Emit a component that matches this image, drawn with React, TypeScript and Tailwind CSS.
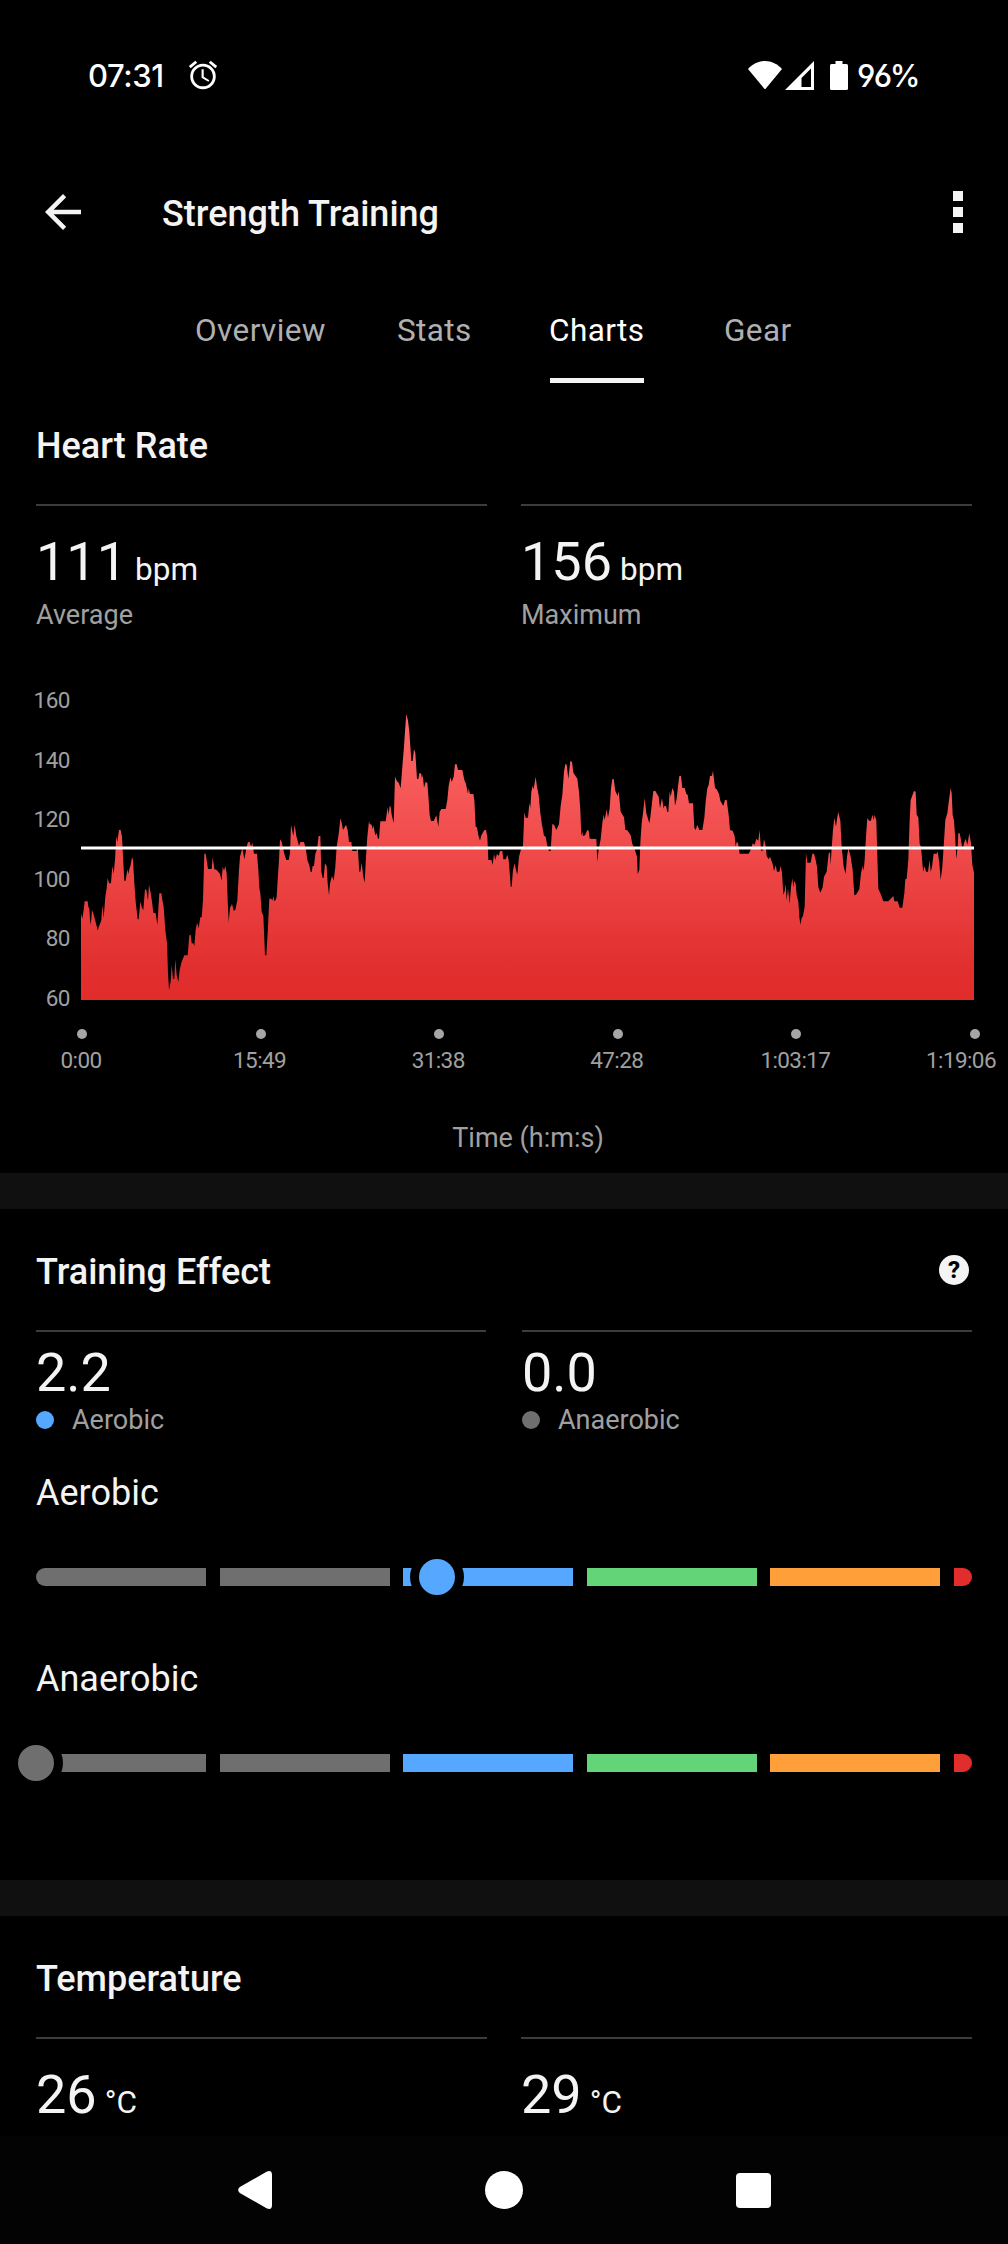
import clsx from "clsx";
import type { ReactNode } from "react";
import { MdAccessAlarm, MdArrowBack } from "react-icons/md";

const TABS = [
	{ label: "Overview", className: "ml-[195px] w-[133px]" },
	{ label: "Stats", className: "ml-[69px] w-[74px]" },
	{ label: "Charts", className: "ml-[79px] w-[94px]", active: true },
	{ label: "Gear", className: "ml-[80px]" },
];

const BPM_LABELS = [160, 140, 120, 100, 80, 60];

const TIME_LABELS = ["0:00", "15:49", "31:38", "47:28", "1:03:17", "1:19:06"];

const EFFECT_ZONES = [
	"w-[170px] rounded-l-full bg-[#6f6f6f]",
	"w-[170px] bg-[#6f6f6f]",
	"w-[170px] bg-[#55a7ff]",
	"w-[170px] bg-[#63d477]",
	"w-[170px] bg-[#ff9f3a]",
	"w-[18px] rounded-r-full bg-[#e22d2d]",
];

// Heart rate curve in chart units, 2679 wide, y = 66 is 160 bpm and y = 960 is 60 bpm.
const HEART_RATE_POINTS = [
	"0,700 4,716 8,690 11,664 20,664 22,680 25,686 28,735 31,716 33,690 37,700 39,708 43,722 46,736 48,740 50,752 54,738 57,732 61,720 64,676 68,714",
	"73,650 77,625 80,594 84,610 90,610 94,558 98,582 102,540 106,468 109,486 114,450 119,450 123,470 126,530 130,602 134,602 139,568 142,582 145,568",
	"149,555 153,532 156,540 160,610 164,665 170,718 173,718 178,665 183,684 187,690 192,628 196,630 201,662 204,614 209,638 213,665 217,698 224,700",
	"229,735 235,640 241,640 244,660 248,680 253,750 258,790 261,880 264,930 269,905 272,855 276,896 280,896 283,838 287,885 292,906 296,870 302,845",
	"310,826 320,826 325,766 329,764 332,790 337,790 340,798 344,750 348,728 353,744 358,712 362,712 366,660 370,521 374,521 377,540 381,567 392,567",
	"395,532 400,567 407,570 417,582 422,602 425,560 429,572 433,558 437,580 440,660 443,726 447,684 453,672 458,692 463,690 469,660 474,570 477,530",
	"484,504 490,538 497,500 501,486 506,486 510,500 514,488 519,521 528,521 532,570 535,625 538,640 542,695 547,708 552,826 556,826 560,760 565,656",
	"571,656 574,662 577,648 580,664 584,660 587,650 590,600 594,540 597,478 602,485 606,505 611,525 616,540 623,540 627,520 630,434 637,468 641,434 646,468",
	"654,498 658,486 669,486 675,510 679,540 685,556 689,576 692,576 695,558 699,558 703,522 708,508 713,468 718,468 721,575 725,594 728,594 732,550",
	"737,558 740,610 744,646 747,610 753,588 758,602 763,560 767,500 774,455 778,415 782,428 786,450 795,434 800,450 804,486 811,486 814,513 827,513",
	"830,498 835,575 838,575 842,548 847,590 851,608 855,530 859,470 864,423 866,432 872,434 875,448 877,436 883,466 887,460 891,476 894,476 898,424 914,424",
	"920,382 923,404 926,378 929,380 932,404 938,430 942,290 948,304 953,308 959,325 964,260 969,200 973,140 976,102 981,122 985,155 991,243 995,243",
	"999,208 1003,218 1008,297 1012,297 1015,280 1020,280 1023,296 1025,282 1029,323 1034,306 1039,308 1043,360 1046,405 1050,423 1058,423 1066,406",
	"1072,440 1076,396 1081,387 1094,387 1099,360 1103,318 1108,292 1112,306 1118,290 1122,253 1127,253 1131,270 1144,270 1150,300 1155,312 1161,342",
	"1163,325 1167,342 1177,342 1180,360 1184,440 1188,442 1192,466 1197,482 1201,466 1210,450 1215,450 1219,470 1222,540 1231,540 1235,555 1239,522",
	"1243,540 1248,521 1253,528 1257,513 1264,513 1267,538 1274,538 1279,524 1283,540 1287,590 1289,620 1292,620 1296,570 1301,550 1305,570 1309,584",
	"1314,530 1320,508 1326,497 1330,397 1334,413 1341,413 1345,370 1348,384 1351,335 1355,318 1358,328 1364,290 1368,320 1373,345 1378,400 1383,434",
	"1389,467 1394,470 1399,498 1404,513 1409,513 1414,432 1419,434 1426,450 1434,432 1439,378 1444,345 1449,275 1453,252 1457,254 1462,297 1468,243",
	"1473,246 1477,278 1489,296 1494,335 1498,390 1501,468 1504,455 1506,468 1512,466 1519,450 1523,452 1526,476 1546,477 1549,545 1553,508 1559,478",
	"1564,430 1568,404 1571,420 1577,388 1581,413 1586,385 1590,325 1594,297 1598,297 1603,333 1610,348 1613,333 1619,395 1629,412 1633,450 1639,451",
	"1649,466 1654,492 1661,508 1668,530 1670,582 1675,570 1678,490 1682,430 1686,400 1691,354 1696,400 1705,430 1708,412 1713,368 1717,333 1723,333",
	"1733,350 1737,385 1743,354 1748,386 1750,378 1755,378 1759,396 1762,396 1766,334 1769,350 1774,324 1779,335 1782,377 1787,356 1791,320 1795,288",
	"1800,288 1804,324 1811,324 1816,342 1820,344 1824,370 1836,370 1840,444 1844,450 1849,434 1855,450 1864,450 1870,414 1874,365 1879,325 1883,315",
	"1887,288 1893,288 1896,272 1902,324 1907,328 1914,342 1918,362 1927,378 1932,360 1937,360 1943,405 1947,450 1955,452 1961,468 1964,500 1967,486",
	"1971,488 1976,521 2003,521 2010,508 2015,490 2021,494 2026,476 2032,482 2036,450 2040,512 2045,512 2049,478 2054,498 2057,528 2063,538 2067,530",
	"2075,552 2079,573 2084,556 2088,575 2095,575 2099,558 2103,578 2107,644 2111,634 2114,612 2117,662 2121,625 2126,672 2130,620 2134,595 2137,622",
	"2140,602 2144,612 2147,645 2152,665 2155,710 2158,734 2162,714 2166,708 2171,680 2175,520 2179,548 2189,548 2194,521 2199,521 2204,540 2208,560",
	"2212,622 2218,638 2225,622 2229,590 2237,575 2243,521 2247,516 2249,556 2252,505 2256,450 2260,414 2265,440 2269,410 2272,396 2278,422 2282,500",
	"2288,560 2294,582 2298,530 2302,505 2309,530 2315,570 2320,646 2325,644 2335,628 2340,580 2345,558 2348,572 2351,540 2355,470 2359,414 2364,422",
	"2370,422 2374,404 2378,420 2381,404 2386,422 2389,530 2392,626 2399,642 2407,664 2422,664 2437,648 2440,664 2450,664 2456,683 2464,683 2470,640",
	"2473,598 2477,596 2482,540 2486,420 2489,360 2499,333 2504,335 2507,404 2512,412 2516,492 2520,500 2525,560 2527,575 2531,558 2535,575 2541,575",
	"2546,540 2549,576 2553,560 2558,521 2567,521 2570,514 2575,550 2579,600 2584,560 2588,500 2593,420 2599,400 2604,360 2609,324 2612,340 2615,405",
	"2619,422 2622,465 2626,537 2630,500 2632,459 2636,460 2640,480 2645,512 2649,490 2654,476 2659,494 2665,460 2670,490 2674,555 2679,578",
].join(" ");

function StatusBar() {
	return (
		<div className="flex h-[150px] items-center pr-[89px] pl-[88px] text-white">
			<span className="w-[101px] font-['Inter'] text-[31px] leading-none font-medium tracking-[-0.4px]">
				07:31
			</span>
			<MdAccessAlarm className="-ml-[3px] size-[34px]" />
			<div className="ml-auto flex items-center">
				<svg viewBox="0 0 34 28" className="h-7 w-[34px]" fill="currentColor">
					<path d="M0 8C4.500 3 10.500 0 17 0S29.500 3 34 8L17 28.500Z" />
				</svg>
				<svg viewBox="0 0 29 29" className="ml-[3px] h-[29px] w-[29px]">
					<path
						d="M29 0V29H0ZM26 7.500L16.500 17V26H26Z"
						fill="currentColor"
						fillRule="evenodd"
					/>
				</svg>
				<svg
					viewBox="0 0 18 29"
					className="ml-4 h-[29px] w-[18px]"
					fill="currentColor"
				>
					<path d="M5.500 0H12.500V3H16.500Q18 3 18 4.500V27.500Q18 29 16.500 29H1.500Q0 29 0 27.500V4.500Q0 3 1.500 3H5.500Z" />
				</svg>
				<span className="ml-[9px] w-[62px] font-['Inter'] text-[31px] leading-none font-medium tracking-[-1.2px] whitespace-nowrap [font-feature-settings:'cv03','cv04']">
					96%
				</span>
			</div>
		</div>
	);
}

function AppBar() {
	return (
		<header className="flex h-[124px] items-center pr-[45px] pl-9">
			<button type="button" aria-label="Back">
				<MdArrowBack className="size-[54px]" />
			</button>
			<h1 className="ml-[72px] pt-[3px] text-[36px] leading-[42px] font-medium">
				Strength Training
			</h1>
			<button
				type="button"
				aria-label="More options"
				className="ml-auto flex flex-col gap-1.5"
			>
				<span className="size-[10px] bg-[#f4f4f4]" />
				<span className="size-[10px] bg-[#f4f4f4]" />
				<span className="size-[10px] bg-[#f4f4f4]" />
			</button>
		</header>
	);
}

function TabBar() {
	return (
		<nav className="flex h-[109px] pt-[38px]">
			{TABS.map((tab) => (
				<button
					key={tab.label}
					type="button"
					className={clsx(
						"flex flex-col items-start justify-between text-[31.5px] leading-[37px] tracking-[0.4px] whitespace-nowrap",
						tab.className,
						tab.active ? "text-white" : "text-[#b0b0b0]",
					)}
				>
					<span className={clsx(tab.active && "-ml-px")}>{tab.label}</span>
					{tab.active && <span className="h-[5px] w-full bg-[#f4f4f4]" />}
				</button>
			))}
		</nav>
	);
}

function SectionTitle({ children }: { children: ReactNode }) {
	return (
		<h2 className="text-[36px] leading-[42px] font-medium">{children}</h2>
	);
}

function Metric({
	value,
	unit,
	label,
}: {
	value: string;
	unit: string;
	label?: string;
}) {
	return (
		<div className="border-t-2 border-[#3c3c3c] pt-6">
			<div className="flex h-[63px] items-baseline gap-2 text-[54px] leading-[63px]">
				{value}
				<span className="text-[31.5px] leading-none">{unit}</span>
			</div>
			{label && (
				<div className="mt-1.5 text-[27px] leading-8 text-[#a0a0a0]">
					{label}
				</div>
			)}
		</div>
	);
}

function HeartRateChart() {
	return (
		<div className="mt-14 text-[22.5px] leading-[26px] text-[#a0a0a0]">
			<div className="flex h-[324px]">
				<div className="flex w-[70px] flex-col justify-between text-right tracking-[-0.5px]">
					{BPM_LABELS.map((bpm) => (
						<span key={bpm}>{bpm}</span>
					))}
				</div>
				<svg
					viewBox="0 66 2679 894"
					preserveAspectRatio="none"
					className="mt-[15px] ml-[11px] h-[298px] w-[893px]"
				>
					<defs>
						<linearGradient
							id="heart-rate-fill"
							gradientUnits="userSpaceOnUse"
							x1="0"
							y1="102"
							x2="0"
							y2="960"
						>
							<stop offset="0" stopColor="#ff6969" />
							<stop offset="0.9" stopColor="#e12e2e" />
							<stop offset="1" stopColor="#e12c2c" />
						</linearGradient>
					</defs>
					<polygon
						points={`0,960 ${HEART_RATE_POINTS} 2679,960`}
						fill="url(#heart-rate-fill)"
					/>
					<rect x="0" y="499.500" width="2679" height="9" fill="#fff" />
				</svg>
			</div>

			<div className="mt-[18px] flex justify-between pr-7 pl-[77px]">
				{TIME_LABELS.map((time, index) => (
					<div key={time} className="flex w-[10px] flex-col items-center">
						<span className="size-[10px] rounded-full bg-[#a6a6a6]" />
						<span
							className={clsx(
								"mt-2 tracking-[-0.6px] whitespace-nowrap",
								index === TIME_LABELS.length - 1
									? "-translate-x-[14px]"
									: "-translate-x-px",
							)}
						>
							{time}
						</span>
					</div>
				))}
			</div>
			<div className="mt-[49px] pl-12 text-center text-[27px] leading-8">
				Time (h:m:s)
			</div>
		</div>
	);
}

function EffectSummary({
	value,
	label,
	dotClassName,
}: {
	value: string;
	label: string;
	dotClassName: string;
}) {
	return (
		<div className="border-t-2 border-[#3c3c3c] pt-[9px]">
			<div className="text-[54px] leading-[63px]">{value}</div>
			<div className="flex items-center gap-[18px] text-[27px] leading-8 text-[#a0a0a0]">
				<span className={clsx("size-[18px] rounded-full", dotClassName)} />
				{label}
			</div>
		</div>
	);
}

function EffectScale({
	label,
	thumbClassName,
}: {
	label: string;
	thumbClassName: string;
}) {
	return (
		<div>
			<h3 className="text-[36px] leading-[42px]">{label}</h3>
			<div className="relative mt-[54px] flex h-[18px] justify-between">
				{EFFECT_ZONES.map((zone, index) => (
					<span key={index} className={clsx("h-full", zone)} />
				))}
				{/* the black ring cuts the bar around the thumb */}
				<span
					className={clsx(
						"absolute -top-[18px] flex size-[54px] items-center justify-center rounded-full bg-black",
						thumbClassName,
					)}
				>
					<span className="size-9 rounded-full bg-current" />
				</span>
			</div>
		</div>
	);
}

function SectionDivider() {
	return <div className="h-9 shrink-0 bg-[#101010]" />;
}

function NavigationBar() {
	return (
		<div className="flex h-[108px] shrink-0 items-center bg-[#030303] text-white">
			<svg
				viewBox="0 0 34 38"
				className="ml-[238px] h-[38px] w-[34px]"
				fill="currentColor"
			>
				<path d="M28.500 0.800Q34 -1.500 34 4V34Q34 39.500 28.500 37.200L1.800 22Q-1.500 19 1.800 16Z" />
			</svg>
			<span className="ml-[213px] size-[38px] rounded-full bg-white" />
			<span className="ml-[213px] size-[35px] rounded-[4px] bg-white" />
		</div>
	);
}

export default function App() {
	return (
		<main className="flex h-[2244px] w-[1008px] flex-col overflow-hidden bg-black font-['Roboto',sans-serif] text-[#f4f4f4]">
			<StatusBar />
			<AppBar />
			<TabBar />

			<section className="h-[790px] pt-[42px]">
				<div className="px-9">
					<SectionTitle>Heart Rate</SectionTitle>
					<div className="mt-[37px] grid grid-cols-2 gap-[34px]">
						<Metric value="111" unit="bpm" label="Average" />
						<Metric value="156" unit="bpm" label="Maximum" />
					</div>
				</div>
				<HeartRateChart />
			</section>

			<SectionDivider />

			<section className="h-[671px] px-9 pt-[42px]">
				<div className="flex items-start justify-between">
					<SectionTitle>Training Effect</SectionTitle>
					<button
						type="button"
						aria-label="Help"
						className="mt-1 mr-[3px] flex size-[30px] items-center justify-center rounded-full bg-[#f4f4f4] text-[24px] leading-none font-extrabold text-black"
					>
						?
					</button>
				</div>
				<div className="mt-[37px] grid grid-cols-2 gap-9">
					<EffectSummary
						value="2.2"
						label="Aerobic"
						dotClassName="bg-[#55a7ff]"
					/>
					<EffectSummary
						value="0.0"
						label="Anaerobic"
						dotClassName="bg-[#6f6f6f]"
					/>
				</div>
				<div className="mt-9 flex flex-col gap-[72px]">
					<EffectScale
						label="Aerobic"
						thumbClassName="left-[374px] text-[#55a7ff]"
					/>
					<EffectScale
						label="Anaerobic"
						thumbClassName="-left-[27px] text-[#6f6f6f]"
					/>
				</div>
			</section>

			<SectionDivider />

			<section className="h-[220px] px-9 pt-[42px]">
				<SectionTitle>Temperature</SectionTitle>
				<div className="mt-[37px] grid grid-cols-2 gap-[34px]">
					<Metric value="26" unit="°C" />
					<Metric value="29" unit="°C" />
				</div>
			</section>

			<NavigationBar />
		</main>
	);
}
